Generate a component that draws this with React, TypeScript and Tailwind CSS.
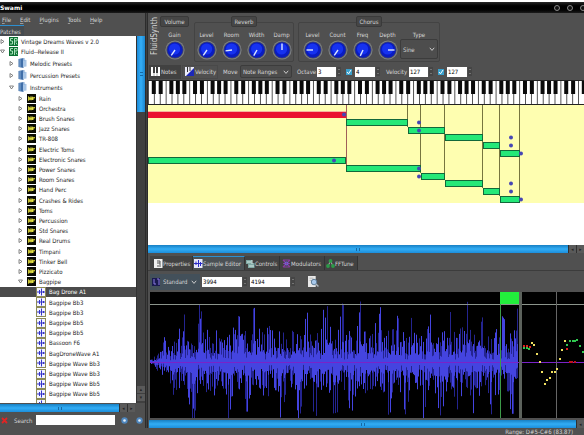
import type { ReactNode } from "react";

type IconKind = "font" | "folder" | "instrument" | "sample";

const instruments = [
  "Rain", "Orchestra", "Brush Snares", "Jazz Snares", "TR-808", "Electric Toms",
  "Electronic Snares", "Power Snares", "Room Snares", "Hand Perc", "Crashes & Rides",
  "Toms", "Percussion", "Std Snares", "Real Drums", "Timpani", "Tinker Bell", "Pizzicato",
];

const samples = [
  "Bag Drone A1", "Bagpipe Bb3", "Bagpipe Bb3", "Bagpipe Bb5", "Bagpipe Bb5", "Bassoon F6",
  "BagDroneWave A1", "Bagpipe Wave Bb3", "Bagpipe Wave Bb3", "Bagpipe Wave Bb5", "Bagpipe Wave Bb5",
];

// x, y, width of every key range on the canvas
const ranges = [
  [198, 14, 62], [260, 22, 37], [297, 29, 38], [335, 37, 17], [352, 45, 20],
  [0, 52, 198], [198, 60, 75], [273, 68, 24], [297, 75, 38], [335, 83, 17], [352, 91, 20],
];
const rangeLines = [[260, 22], [273, 68], [297, 75], [335, 83], [352, 91], [372, 91]];
const rootNotes = [
  [196, 9], [186, 55], [271, 17], [271, 25], [271, 63], [271, 71],
  [363, 32], [363, 40], [373, 48], [363, 78], [363, 86], [373, 94],
];

const dots = [
  [9, 53, "#e02020"], [12, 53, "#e02020"], [15, 54, "#e02020"], [9, 55, "#30c850"], [12, 55, "#30c850"], [14, 56, "#30c850"],
  [17, 50, "#f0e060"], [19, 52, "#f0e060"], [22, 61, "#f0e060"], [25, 69, "#f0e060"], [27, 79, "#f0e060"],
  [30, 91, "#f0e060"], [32, 87, "#f0e060"], [35, 85, "#f0e060"], [37, 79, "#f0e060"], [40, 79, "#f0e060"], [42, 76, "#f0e060"],
  [45, 66, "#f0e060"], [47, 57, "#f0e060"], [50, 48, "#f0e060"], [52, 52, "#30c850"], [52, 56, "#e02020"],
  [55, 48, "#30c850"], [58, 48, "#30c850"], [60, 48, "#30c850"], [62, 47, "#30c850"], [65, 53, "#30c850"], [68, 59, "#30c850"],
  [55, 69, "#c01020"], [57, 69, "#c01020"], [60, 69, "#c01020"],
] as const;

function noise(n: number) {
  const s = Math.sin(n * 127.1 + 11.7) * 43758.5453;
  return s - Math.floor(s);
}

function TreeIcon({ kind }: { kind: IconKind }) {
  if (kind === "font")
    return (
      <svg className="size-[9px] shrink-0" viewBox="0 0 9 9">
        <rect width="9" height="9" fill="#0a7032" />
        <path d="M4 1.5H1.5V4H3.5V7H1M5.5 8V1.5H8V4H5.5M7 5.5L8 7.5" stroke="#b8ecc6" strokeWidth=".9" fill="none" />
      </svg>
    );
  if (kind === "folder")
    return (
      <svg className="h-[10px] w-[9px] shrink-0" viewBox="0 0 9 10">
        <path d="M.5 1L5.5 0V10L.5 9Z" fill="#3f6ea8" />
        <path d="M5 1.5L8.5 2V8.5L5 9Z" fill="#a9c6e6" />
        <path d="M2 1V9M6 0V3" stroke="#86abd6" />
      </svg>
    );
  if (kind === "instrument")
    return (
      <svg className="size-[9px] shrink-0" viewBox="0 0 9 9">
        <rect width="9" height="9" fill="#0c0c04" />
        <path d="M1 2L3 3.6L8 3V4.2L6.5 4.6V6L3 5.8L1 7Z" fill="#c8c430" />
        <path d="M4 2.2V6.4M5.6 2.6V6" stroke="#f0ec50" strokeWidth=".8" />
      </svg>
    );
  return (
    <svg className="size-[10px] shrink-0" viewBox="0 0 10 10">
      <rect x=".5" y=".5" width="9" height="9" fill="#f4f4ff" stroke="#8c8a55" />
      <path d="M1 5H9M3.5 3V7M5.5 1.5V8.5M7.5 4V6" stroke="#3434c8" fill="none" />
    </svg>
  );
}

function TreeRow({ label, kind, className, open, leaf, active }: { label: string; kind: IconKind; className: string; open?: boolean; leaf?: boolean; active?: boolean }) {
  return (
    <li className={`flex min-h-0 items-center whitespace-nowrap ${className} ${active ? "bg-[#4b4b4b] text-white" : ""}`}>
      {!leaf && (
        <svg className="mr-1 size-[5px] shrink-0" viewBox="0 0 5 5" fill="#fff" stroke="#555" strokeWidth=".7">
          {open ? <path d="M.5 1H4.5L2.5 4Z" /> : <path d="M1 .5V4.5L4 2.5Z" />}
        </svg>
      )}
      <TreeIcon kind={kind} />
      <span className="ml-[3px]">{label}</span>
    </li>
  );
}

function Knob({ label, angle }: { label: string; angle: number }) {
  return (
    <label className="flex w-[25px] flex-col items-center">
      <span className="mb-px h-[9px] leading-[10px]">{label}</span>
      <span className="grid">
        <svg className="col-start-1 row-start-1 size-5" viewBox="0 0 20 20">
          <circle cx="10" cy="10" r="9.6" fill="#7d8084" />
          <circle cx="10" cy="10" r="8.6" fill="#4a4e5a" />
          <circle cx="10" cy="10" r="7.8" fill="#0a1cc0" />
          <circle cx="9.6" cy="9" r="5.6" fill="#1632f0" />
          <path d="M10 10V3.5" stroke="#dce6ff" strokeWidth="1.4" transform={`rotate(${angle} 10 10)`} />
        </svg>
        <input type="range" className="col-start-1 row-start-1 size-5 opacity-0" />
      </span>
    </label>
  );
}

function Group({ title, className, children }: { title: string; className: string; children: ReactNode }) {
  return (
    <div className={`mt-[9px] flex h-10 flex-col items-center rounded-xs border ${className}`}>
      <button className="-mt-[7px] h-[11px] shrink-0 rounded-xs border border-[#3a3a3a] bg-[#464646] px-[3px] leading-[8px]">{title}</button>
      <div className="mt-[3px] flex">{children}</div>
    </div>
  );
}

function Combo({ label, value, className }: { label: string; value: string; className: string }) {
  return (
    <span className={`grid items-center rounded-xs border ${className}`}>
      <select aria-label={label} className="col-start-1 row-start-1 h-full w-full appearance-none pl-[2px] outline-none">
        <option>{value}</option>
      </select>
      <svg className="pointer-events-none col-start-1 row-start-1 mr-[2px] size-[6px] justify-self-end" viewBox="0 0 6 6">
        <path d="M.8 1.8L3 4.4L5.2 1.8" stroke="#ccc" fill="none" />
      </svg>
    </span>
  );
}

function Spin({ label, value, className }: { label: string; value: string; className: string }) {
  return (
    <span className="flex items-center">
      <input aria-label={label} defaultValue={value} className={`h-[10px] bg-white pl-px text-black outline-none ${className}`} />
      <svg className="ml-px h-[9px] w-1" viewBox="0 0 4 9">
        <rect width="4" height="9" fill="#454545" />
        <path d="M1 3L2 2L3 3M1 6L2 7L3 6" stroke="#888" strokeWidth=".7" fill="none" />
      </svg>
    </span>
  );
}

function Check({ label, className }: { label: string; className: string }) {
  return (
    <span className={`grid ${className}`}>
      <input type="checkbox" aria-label={label} defaultChecked className="col-start-1 row-start-1 size-[6px] appearance-none bg-[#3aa0cc]" />
      <svg className="pointer-events-none col-start-1 row-start-1 size-[6px]" viewBox="0 0 6 6">
        <path d="M1 3L2.5 4.8L5 1" stroke="#fff" fill="none" />
      </svg>
    </span>
  );
}

function HScroll({ buttons }: { buttons: number }) {
  return (
    <div className="flex h-2 bg-[#303030]">
      <div className="flex flex-1 items-center justify-center bg-linear-to-b from-[#1780c4] via-[#32adf5] to-[#1c8edb]">
        <i className="h-[3px] w-1 border-x border-[#1769a5]" />
      </div>
      {["◂", "▸"].slice(0, buttons).map((b) => (
        <button key={b} className="ml-px w-[7px] bg-[#5a5a5a] text-[5px] leading-[8px] text-[#222]">{b}</button>
      ))}
    </div>
  );
}

function Piano() {
  const white = 436 / 74;
  const keys = Array.from({ length: 75 }, (_, i) => i);
  const shift = [0, -0.5, 0.5, 0, -0.6, 0, 0.6];
  return (
    <svg className="h-[25px] w-full shrink-0" viewBox="0 0 436 25" preserveAspectRatio="none">
      <rect width="436" height="25" fill="#fff" />
      {keys.map((i) => <rect key={i} x={i * white} y="0" width=".9" height="25" fill="#444" />)}
      {keys.filter((i) => i % 7 !== 0 && i % 7 !== 3).map((i) => (
        <rect key={i} x={i * white - 1.6 + shift[i % 7]} y="1" width="4" height="13" fill="#0a0a0a" />
      ))}
      <path d="M0 .5H436M0 24.5H436" stroke="#222" />
    </svg>
  );
}

function RangeCanvas() {
  return (
    <svg className="min-h-0 w-full flex-[140]" viewBox="0 0 436 140" preserveAspectRatio="none">
      <rect width="436" height="140" fill="#fff" />
      <rect width="436" height="98" fill="#fefeb0" />
      <path d="M198.5 0V60" stroke="#a06058" />
      <path d="M0 6.5H198" stroke="#f6b4a0" />
      {rangeLines.map(([x, h]) => <path key={x} d={`M${x - 0.5} 0V${h}`} stroke="#77753f" />)}
      <rect x="0" y="7" width="198" height="6" fill="#ea1230" />
      {ranges.map(([x, y, w]) => (
        <rect key={`${x}-${y}`} x={x + 0.5} y={y + 0.5} width={w - 1} height="6" fill="#24e878" stroke="#12683a" />
      ))}
      {rootNotes.map(([x, y]) => <circle key={`${x}-${y}`} cx={x} cy={y + 0.5} r="2" fill="#4646b4" />)}
    </svg>
  );
}

function Waveform() {
  let dim = "";
  let bright = "";
  for (let x = 0; x < 368; x++) {
    const fade = Math.min(1, 0.05 + x / 36);
    const phase = Math.cos(((x - 51) / 17.7) * Math.PI * 2);
    const a = noise(x);
    const b = noise(x + 900);
    const up = fade * (7 + a ** 1.3 * (32 + 10 * phase) + (phase > 0.6 && a > 0.7 ? 10 : 0));
    const down = fade * (7 + b ** 1.3 * (30 - 12 * phase) + (phase < -0.4 && b > 0.75 ? 10 : 0));
    const tone = noise(x + 400);
    const line = `M${x + 0.5} ${(70 - up).toFixed(1)}V${(70 + down).toFixed(1)}`;
    if (tone > 0.5) bright += line;
    else {
      // dim strokes reach further than the bright core they surround
      dim += `M${x + 0.5} ${(70 - up - fade * 5 * tone).toFixed(1)}V${(70 + down + fade * 5 * tone).toFixed(1)}`;
      bright += `M${x + 0.5} ${(70 - up * 0.35).toFixed(1)}V${(70 + down * 0.4).toFixed(1)}`;
    }
  }
  return (
    <svg className="ml-[2px] min-h-0 flex-[126]" viewBox="0 0 434 126" preserveAspectRatio="none">
      <rect width="434" height="126" fill="#000" />
      <path d={dim} stroke="#242490" />
      <path d={bright} stroke="#4444e0" />
      <path d="M0 12.5H434" stroke="#8b948b" />
      <path d="M0 70.5H434" stroke="#7a22c8" />
      <rect x="350" y="0" width="19" height="12" fill="#22ee3c" />
      <path d="M350.5 12V126" stroke="#3c9a48" />
      <path d="M369.5 12V126" stroke="#3f8f4a" />
      <rect x="369" y="0" width="3" height="126" fill="#5c625c" />
      <path d="M406.5 0V126" stroke="#666" />
      {dots.map(([x, y, c]) => <rect key={`${x}-${y}`} x={x + 364} y={y} width="2" height="2" fill={c} />)}
    </svg>
  );
}

function Tab({ label, className, children }: { label: string; className: string; children: ReactNode }) {
  return (
    <button role="tab" className={`flex h-[14px] items-center whitespace-nowrap border-r border-[#333] ${className}`}>
      <svg className="size-[9px] shrink-0" viewBox="0 0 9 9" fill="none">{children}</svg>
      {label}
    </button>
  );
}

function LeftPanel() {
  return (
    <aside className="flex w-[145px] shrink-0 flex-col">
      <nav className="flex h-3 items-center gap-[9px] pl-[2px]">
        {["File", "Edit", "Plugins", "Tools", "Help"].map((m) => (
          <button key={m}><span className="underline decoration-[#999]">{m[0]}</span>{m.slice(1)}</button>
        ))}
      </nav>
      <div className="flex h-[11px]">
        <button className="w-6 border-t border-[#2d8fd0] bg-[#454b50] text-left">Patches</button>
      </div>
      <div className="flex min-h-0 flex-1">
        <ul className="flex min-w-0 flex-1 flex-col overflow-hidden bg-white text-[#1c1c1c]">
          <TreeRow label="Vintage Dreams Waves v 2.0" kind="font" className="h-[10px]" />
          <TreeRow label="Fluid--Release II" kind="font" className="h-[11px]" open />
          <TreeRow label="Melodic Presets" kind="folder" className="h-3 pl-[9px]" />
          <TreeRow label="Percussion Presets" kind="folder" className="h-3 pl-[9px]" />
          <TreeRow label="Instruments" kind="folder" className="h-3 pl-[9px]" open />
          {instruments.map((n) => <TreeRow key={n} label={n} kind="instrument" className="flex-1 pl-[18px]" />)}
          <TreeRow label="Bagpipe" kind="instrument" className="flex-1 pl-[18px]" open />
          {samples.map((n, i) => <TreeRow key={i} label={n} kind="sample" className="flex-1 pl-9" leaf active={i === 0} />)}
          <li className="h-1 overflow-hidden pl-9"><TreeIcon kind="sample" /></li>
        </ul>
        <div className="flex w-[9px] flex-col border-l border-[#333] bg-[#404040]">
          <div className="flex h-[76px] items-center justify-center bg-linear-to-r from-[#1b8ad8] via-[#34aef6] to-[#1b86d0]">
            <i className="h-1 w-[3px] border-y border-[#1769a5]" />
          </div>
          <div className="flex-1" />
          <button className="mb-px h-[7px] bg-[#5a5a5a] text-[5px] leading-[7px] text-[#222]">▴</button>
          <button className="mb-[2px] h-[7px] bg-[#5a5a5a] text-[5px] leading-[7px] text-[#222]">▾</button>
        </div>
      </div>
      <div className="pr-[10px] pt-px"><HScroll buttons={2} /></div>
      <div className="flex h-4 items-center">
        <button aria-label="Clear">
          <svg className="ml-px size-[7px]" viewBox="0 0 7 7"><path d="M1 1L6 6M6 1L1 6" stroke="#e02424" strokeWidth="1.8" /></svg>
        </button>
        <label htmlFor="search" className="ml-[6px] w-[22px]">Search</label>
        <input id="search" className="h-[10px] min-w-0 flex-1 bg-white px-px text-black outline-none" />
        {["Previous", "Next"].map((n) => (
          <button key={n} aria-label={n} className="ml-[6px] mr-[2px]">
            <svg className="size-[7px]" viewBox="0 0 7 7">
              <circle cx="3.5" cy="3.5" r="3.2" fill="#4d86be" />
              <circle cx="3.5" cy="3.5" r="1.3" fill="#e4f0fa" />
            </svg>
          </button>
        ))}
      </div>
    </aside>
  );
}

function Synth() {
  return (
    <section className="flex h-[50px] shrink-0">
      <h2 className="w-[11px] rotate-180 pr-[3px] pt-2 text-[8px] font-normal leading-[8px] [writing-mode:vertical-rl]">FluidSynth</h2>
      <Group title="Volume" className="ml-[2px] mr-[6px] w-[27px] border-transparent">
        <Knob label="Gain" angle={215} />
      </Group>
      <Group title="Reverb" className="mr-1 w-[100px] border-[#434343]">
        <Knob label="Level" angle={215} />
        <Knob label="Room" angle={262} />
        <Knob label="Width" angle={210} />
        <Knob label="Damp" angle={0} />
      </Group>
      <Group title="Chorus" className="w-[142px] border-[#434343]">
        <Knob label="Level" angle={270} />
        <Knob label="Count" angle={215} />
        <Knob label="Freq" angle={205} />
        <Knob label="Depth" angle={90} />
        <span className="flex flex-col items-center">
          <span className="h-[9px] leading-[10px]">Type</span>
          <Combo label="Type" value="Sine" className="h-5 w-[38px] border-[#3c3c3c] bg-[#4d4d4d]" />
        </span>
      </Group>
    </section>
  );
}

function KeyToolbar() {
  return (
    <div className="flex h-[17px] shrink-0 items-center">
      <button className="ml-px flex h-[14px] w-8 items-center gap-px bg-[#414141] pl-[2px]">
        <svg className="size-[9px] shrink-0" viewBox="0 0 9 9">
          <rect width="9" height="9" fill="#fff" />
          <path d="M3 0V6M6 0V6" stroke="#111" strokeWidth="1.6" />
          <path d="M3 6V9M6 6V9" stroke="#555" strokeWidth=".5" />
        </svg>
        Notes
      </button>
      <button className="ml-px flex h-[14px] w-9 items-center border border-[#494949] bg-[#505050] pl-[2px]">
        <svg className="mr-px size-[9px] shrink-0" viewBox="0 0 9 9">
          <rect width="9" height="9" fill="#eeeefa" />
          <path d="M2.5 0V5M5 0V4" stroke="#333" />
          <path d="M9 1V9H1Z" fill="#1c28b8" />
        </svg>
        Velocity
      </button>
      <span className="ml-[5px] w-[17px]">Move</span>
      <Combo label="Move" value="Note Ranges" className="h-[13px] w-[52px] border-[#3c3c3c] bg-[#4c4c4c]" />
      <span className="ml-[5px] w-5">Octave</span>
      <Spin label="Octave" value="3" className="w-[19px]" />
      <Check label="Lower follow" className="ml-[5px] mr-[3px]" />
      <Spin label="Upper octave" value="4" className="w-5" />
      <span className="ml-[6px] w-[23px]">Velocity</span>
      <Spin label="Velocity" value="127" className="w-[19px]" />
      <Check label="Upper follow" className="ml-[5px] mr-[3px]" />
      <Spin label="Upper velocity" value="127" className="w-5" />
    </div>
  );
}

function App() {
  return (
    <div className="flex h-screen w-full flex-col overflow-hidden bg-[#505050] font-['DejaVu_Sans_Condensed','DejaVu_Sans',sans-serif] text-[6px] leading-[9px] text-[#d6d6d6]">
      <header className="flex h-[13px] shrink-0 items-center justify-between overflow-hidden border-t-2 border-white bg-linear-to-b from-[#2a2a2a] via-black to-[#1c1c1c]">
        <h1 className="font-['DejaVu_Sans',sans-serif] font-bold text-white">Swami</h1>
        <div className="-mr-[2px] flex gap-[7px]">
          {["Minimize", "Maximize", "Close"].map((n) => (
            <button key={n} aria-label={n} className="size-[6px] rounded-full border border-[#8a8a8a] bg-[#111]" />
          ))}
        </div>
      </header>
      <div className="flex min-h-0 flex-1">
        <LeftPanel />
        <div className="w-[3px] border-x border-[#2c2c2c] bg-[#404040]" />
        <main className="flex min-w-0 flex-1 flex-col">
          <Synth />
          <KeyToolbar />
          <Piano />
          <RangeCanvas />
          <HScroll buttons={2} />
          <div role="tablist" className="flex h-[18px] shrink-0 items-end border-b border-[#3c3c3c] pl-[2px]">
            <Tab label="Properties" className="w-[43px] bg-[#424242] pl-1">
              <path d="M0 0H8.5V9H0Z" fill="#f0f0f0" />
              <path d="M3 2H6V6M3 7H7M3 4H6" stroke="#555" />
            </Tab>
            <Tab label="Sample Editor" className="w-[52px] border-t border-t-[#2d8fd0] bg-[#4b5155] pl-px">
              <path d="M0 0H8.5V9H0Z" fill="#e6e6fa" />
              <path d="M0 4.5H8.5M2 2.5V6M4.5 1V8M6.5 3V7" stroke="#2a2ac8" />
            </Tab>
            <Tab label="Controls" className="w-[35px] bg-[#424242] pl-px">
              <path d="M0 1H6V4H8.5V9H2V5H0Z" fill="#7fa8a4" />
              <path d="M1 3H5M3 7H8M6 1V5" stroke="#d5e8e4" />
            </Tab>
            <Tab label="Modulators" className="w-[45px] bg-[#424242] pl-[2px]">
              <path d="M1 1L8 8M8 1L1 8M1 4.5H8M1 1H7.5M1 8H7.5" stroke="#8a3ca0" strokeWidth="1.2" />
              <circle cx="4.5" cy="4.5" r="1.5" stroke="#6a6ae8" />
            </Tab>
            <Tab label="FFTune" className="w-[33px] bg-[#424242] pl-px">
              <path d="M4.5 2L2 7M4.5 2L7 7" stroke="#b8b8b8" />
              <circle cx="4.5" cy="2" r="1.9" fill="#2c9a48" />
              <circle cx="2" cy="7" r="1.9" fill="#2c9a48" />
              <circle cx="7" cy="7" r="1.9" fill="#2c9a48" />
            </Tab>
          </div>
          <div className="flex h-[21px] shrink-0 items-center pl-[2px]">
            <div className="flex h-4 w-[50px] items-center bg-[#43505a] pl-[2px]">
              <svg className="size-[8px] shrink-0" viewBox="0 0 8 8">
                <rect width="8" height="8" fill="#1a1a50" />
                <path d="M2 1V6H4M5 1H7V7" stroke="#8a7ae0" fill="none" />
              </svg>
              <Combo label="View" value="Standard" className="h-3 flex-1 border-transparent" />
            </div>
            <span className="ml-[2px]"><Spin label="Loop start" value="3994" className="w-10" /></span>
            <span className="ml-[3px]"><Spin label="Loop end" value="4194" className="w-10" /></span>
            <button aria-label="Find loops" className="ml-[13px]">
              <svg className="size-[11px]" viewBox="0 0 10 10">
                <path d="M0 0H7V10H0Z" fill="#e8e8e8" />
                <path d="M1.5 2H5M1.5 4H4" stroke="#aaa" strokeWidth=".7" />
                <circle cx="5.5" cy="5.5" r="2.5" fill="#a8c8ea" stroke="#50708c" strokeWidth=".8" />
                <path d="M7.2 7.2L9.5 9.5" stroke="#b0b8c0" strokeWidth="1.3" />
              </svg>
            </button>
          </div>
          <Waveform />
          <div className="pl-px pt-[2px]"><HScroll buttons={1} /></div>
        </main>
      </div>
      <footer className="h-[7px] shrink-0 pr-[11px] text-right leading-[7px]">Range: D#5-C#6 (83.87)</footer>
    </div>
  );
}

export default App;
